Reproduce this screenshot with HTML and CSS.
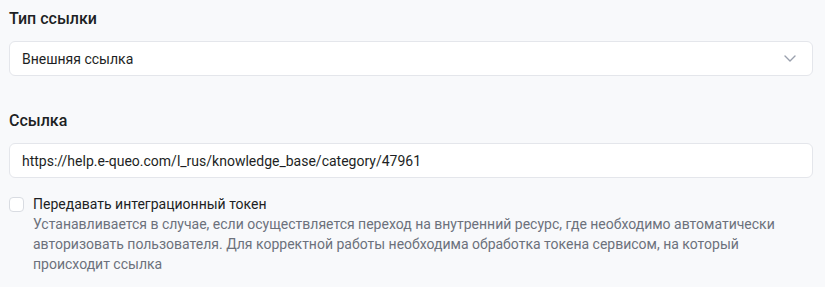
FILE: index.html
```html
<!DOCTYPE html>
<html lang="ru">

<head>
  <meta charset="UTF-8" />
  <meta name="viewport" content="width=device-width, initial-scale=1.0" />
  <title>Тип ссылки</title>
  <link rel="stylesheet" href="styles.css">
</head>

<body>
  <div class="container">
    <div class="form-group">
      <label class="field-label" for="link-type">Тип ссылки</label>
      <div class="select">
        <span class="select-value" id="link-type">Внешняя ссылка</span>
        <svg class="select-arrow" width="12" height="7" viewBox="0 0 12 7" fill="none">
          <path d="M1 1l5 5 5-5" stroke="#9aa0ad" stroke-width="1.4" stroke-linecap="round" stroke-linejoin="round" />
        </svg>
      </div>
    </div>
    <div class="form-group form-group-last">
      <label class="field-label" for="link-url">Ссылка</label>
      <input class="text-input" type="text" id="link-url" value="https://help.e-queo.com/l_rus/knowledge_base/category/47961">
    </div>
    <div class="checkbox-row">
      <span class="checkbox"></span>
      <div class="checkbox-text">
        <div class="checkbox-title">Передавать интеграционный токен</div>
        <div class="checkbox-hint">Устанавливается в случае, если осуществляется переход на внутренний ресурс, где необходимо автоматически авторизовать пользователя. Для корректной работы необходима обработка токена сервисом, на который происходит ссылка</div>
      </div>
    </div>
  </div>
</body>

</html>
```

FILE: styles.css
```css
body {
  font-family: 'Roboto', 'Liberation Sans', sans-serif;
  margin: 0;
  padding: 0;
  background-color: #f8f9fb;
  color: #1d1f24;
}

.container {
  width: 804px;
  padding: 7px 12px 0 9px;
}

.form-group {
  margin-bottom: 33px;
}

.form-group-last {
  margin-bottom: 16px;
}

.field-label {
  display: block;
  font-size: 16px;
  font-weight: 500;
  line-height: 24px;
  margin-bottom: 10px;
}

.select,
.text-input {
  box-sizing: border-box;
  width: 100%;
  height: 35px;
  background: #fff;
  border: 1px solid #e4e6eb;
  border-radius: 6px;
  font-family: inherit;
  font-size: 14px;
  color: #1d1f24;
}

.select {
  display: flex;
  align-items: center;
  justify-content: space-between;
  padding: 0 16px 0 12px;
}

.text-input {
  display: block;
  padding: 0 12px;
  outline: none;
}

.checkbox-row {
  display: flex;
  gap: 9px;
  align-items: flex-start;
}

.checkbox {
  width: 15px;
  height: 15px;
  box-sizing: border-box;
  border: 1px solid #d9dce2;
  border-radius: 4px;
  background: #fff;
  margin-top: 3px;
  flex-shrink: 0;
}

.checkbox-title {
  font-size: 14px;
  line-height: 20px;
}

.checkbox-hint {
  font-size: 14px;
  line-height: 20px;
  color: #6c717c;
}
```
